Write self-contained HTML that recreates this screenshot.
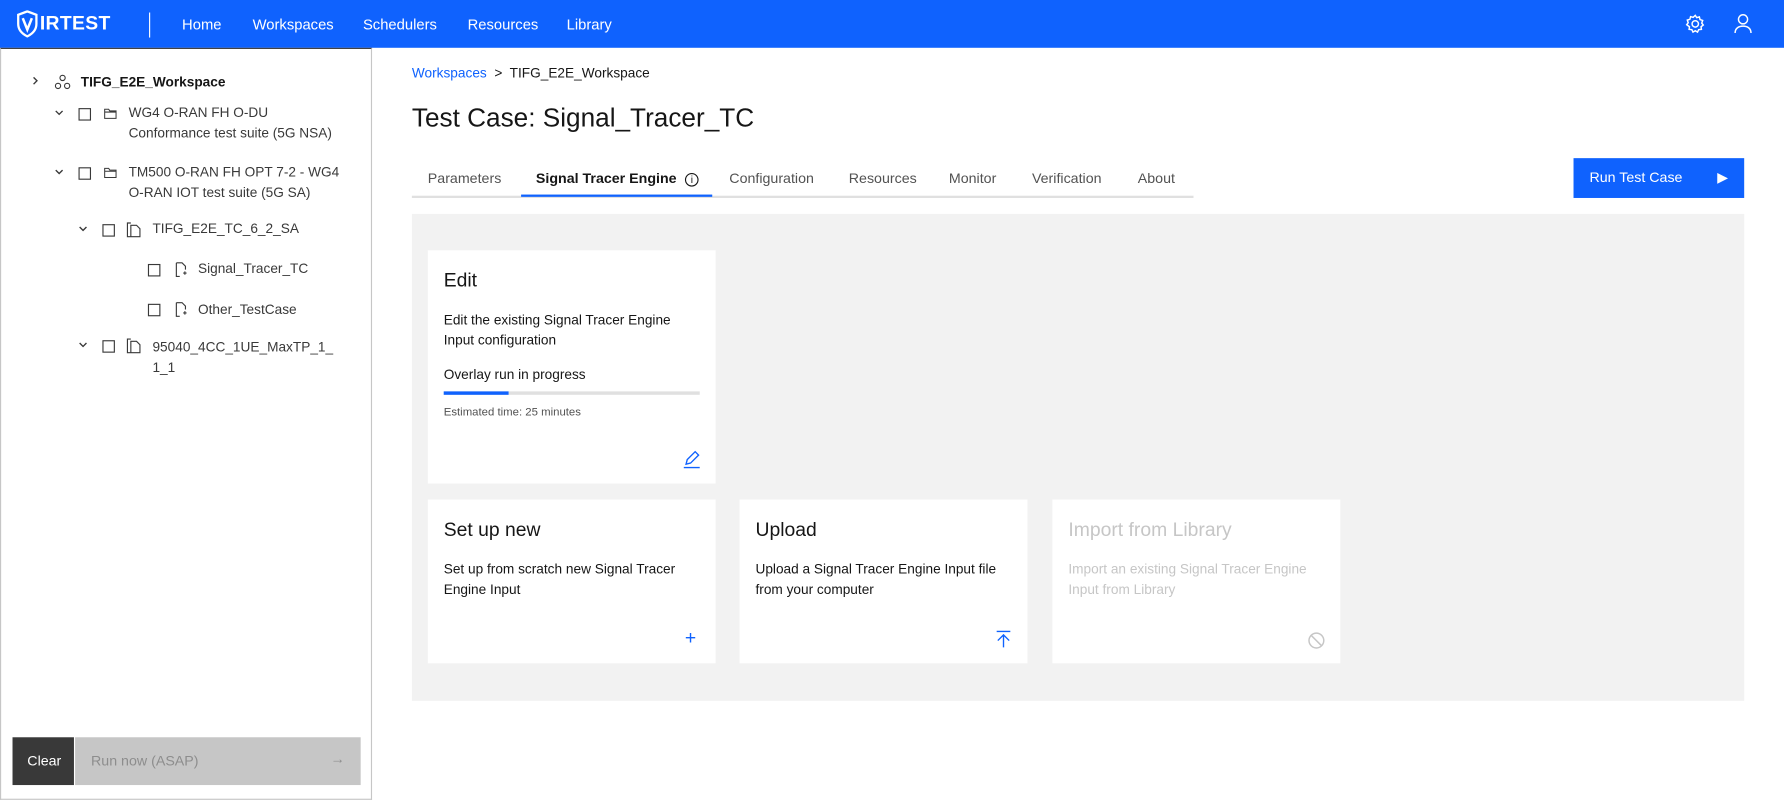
<!DOCTYPE html>
<html><head><meta charset="utf-8"><style>
*{box-sizing:border-box;margin:0;padding:0}
html,body{width:1784px;height:800px;overflow:hidden;background:#fff}
#w{width:1568px;height:703px;transform:scale(1.13776);transform-origin:0 0;position:relative;font-family:"Liberation Sans",sans-serif;color:#161616}
.a{position:absolute}
.top{left:0;top:0;width:1568px;height:42px;background:#0f62fe;color:#fff}
.nav{font-size:13px;top:14px;color:#fff}
.side{left:0;top:42px;width:327px;height:661px;border:1px solid #c6c6c6;border-top:1px solid #333}
.t{font-size:12px;color:#393939;line-height:18px}
.cb{width:11px;height:11px;border:1.3px solid #393939}
.card{background:#fff;width:253px}
.card h3{font-size:17px;font-weight:normal;position:absolute;left:14px;top:17px}
.card p{font-size:12px;line-height:18px;position:absolute;left:14px;top:52px;width:215px;color:#161616}
.tab{font-size:12.5px;top:150px;color:#525252}
</style></head><body><div id="w">
<svg width="0" height="0" style="position:absolute"><defs>
<symbol id="chev" viewBox="0 0 10 10"><path d="M2 3.5l3 3 3-3" fill="none" stroke="#393939" stroke-width="1.2"/></symbol>
<symbol id="fold" viewBox="0 0 12 12"><path d="M1 2h3.5l1 1.5H11V10H1z M1 4.5h10" fill="none" stroke="#393939" stroke-width="0.9"/></symbol>
<symbol id="file" viewBox="0 0 12 14"><path d="M2 1h5l3 3v3M2 1v12h3M8 10h3M9.5 8.5v3" fill="none" stroke="#393939" stroke-width="1"/></symbol>
<symbol id="suite" viewBox="0 0 14 14"><path d="M4 1H1v12h3M4 3h5l3 3v7H4z" fill="none" stroke="#393939" stroke-width="1"/></symbol>
</defs></svg>
<div class="a top">
 <svg class="a" style="left:14px;top:9px" width="20" height="24" viewBox="0 0 20 24"><path d="M10 1L2 4v8c0 6 4 9 8 11 4-2 8-5 8-11V4z" fill="none" stroke="#fff" stroke-width="2"/><path d="M6 7l4 10 4-10" fill="none" stroke="#fff" stroke-width="2.2"/></svg>
 <div class="a" style="left:35px;top:11px;font-size:17px;font-weight:bold;letter-spacing:0.3px">IRTEST</div>
 <div class="a" style="left:131px;top:11px;width:1px;height:22px;background:#fff"></div>
 <div class="a nav" style="left:160px">Home</div>
 <div class="a nav" style="left:222px">Workspaces</div>
 <div class="a nav" style="left:319px">Schedulers</div>
 <div class="a nav" style="left:411px">Resources</div>
 <div class="a nav" style="left:498px">Library</div>
 <svg class="a" style="left:1481px;top:12px" width="18" height="18" viewBox="0 0 18 18" fill="none" stroke="#fff" stroke-width="1.3"><circle cx="9" cy="9" r="2.8"/><path d="M9 1.5l1.3 2 2.3-.6.6 2.3 2.3.8-.8 2.3 1.3 1.7-1.9 1.5.3 2.3-2.4.3-1 2.1-2-1.2-2 1.2-1-2.1-2.4-.3.3-2.3L1.5 9.7 2.8 8 2 5.7l2.3-.8.6-2.3 2.3.6z"/></svg>
 <svg class="a" style="left:1524px;top:12px" width="16" height="18" viewBox="0 0 16 18" fill="none" stroke="#fff" stroke-width="1.3"><circle cx="8" cy="5" r="4"/><path d="M1 17c0-4 3-6 7-6s7 2 7 6"/></svg>
</div>
<div class="a side">
 <svg class="a" style="left:25px;top:23px" width="10" height="10" viewBox="0 0 10 10"><path d="M3.5 2l3 3-3 3" fill="none" stroke="#393939" stroke-width="1.2"/></svg>
 <svg class="a" style="left:47px;top:22px" width="14" height="14" viewBox="0 0 14 14" fill="none" stroke="#393939"><circle cx="7" cy="3.5" r="2.3"/><circle cx="3" cy="10.5" r="2.3"/><circle cx="11" cy="10.5" r="2.3"/></svg>
 <div class="a t" style="left:70px;top:20px;font-weight:bold;color:#161616">TIFG_E2E_Workspace</div>
 <svg class="a" style="left:46px;top:51px" width="10" height="10"><use href="#chev"/></svg><div class="a cb" style="left:68px;top:52px"></div><svg class="a" style="left:90px;top:51px" width="12" height="12"><use href="#fold"/></svg>
 <div class="a t" style="left:112px;top:47px">WG4 O-RAN FH O-DU<br>Conformance test suite (5G NSA)</div>
 <svg class="a" style="left:46px;top:103px" width="10" height="10"><use href="#chev"/></svg><div class="a cb" style="left:68px;top:104px"></div><svg class="a" style="left:90px;top:103px" width="12" height="12"><use href="#fold"/></svg>
 <div class="a t" style="left:112px;top:99px">TM500 O-RAN FH OPT 7-2 - WG4<br>O-RAN IOT test suite (5G SA)</div>
 <svg class="a" style="left:67px;top:153px" width="10" height="10"><use href="#chev"/></svg><div class="a cb" style="left:89px;top:154px"></div><svg class="a" style="left:110px;top:152px" width="14" height="14"><use href="#suite"/></svg>
 <div class="a t" style="left:133px;top:149px">TIFG_E2E_TC_6_2_SA</div>
 <div class="a cb" style="left:129px;top:189px"></div><svg class="a" style="left:152px;top:187px" width="12" height="14"><use href="#file"/></svg><div class="a t" style="left:173px;top:184px">Signal_Tracer_TC</div>
 <div class="a cb" style="left:129px;top:224px"></div><svg class="a" style="left:152px;top:222px" width="12" height="14"><use href="#file"/></svg><div class="a t" style="left:173px;top:220px">Other_TestCase</div>
 <svg class="a" style="left:67px;top:255px" width="10" height="10"><use href="#chev"/></svg><div class="a cb" style="left:89px;top:256px"></div><svg class="a" style="left:110px;top:254px" width="14" height="14"><use href="#suite"/></svg>
 <div class="a t" style="left:133px;top:253px">95040_4CC_1UE_MaxTP_1_<br>1_1</div>
 <div class="a" style="left:10px;top:605px;width:54px;height:42px;background:#393939;color:#fff;font-size:12.5px;padding:14px 0 0 13px">Clear</div>
 <div class="a" style="left:65px;top:605px;width:251px;height:42px;background:#c6c6c6;color:#8d8d8d;font-size:12.5px;padding:14px 0 0 14px">Run now (ASAP)<span style="position:absolute;right:14px;top:12px">→</span></div>
</div>
<div class="a" style="left:362px;top:57px;font-size:12px;color:#0f62fe">Workspaces <span style="color:#161616">&nbsp;&gt;&nbsp; TIFG_E2E_Workspace</span></div>
<div class="a" style="left:362px;top:90px;font-size:23px;color:#161616">Test Case: Signal_Tracer_TC</div>
<div class="a" style="left:362px;top:172px;width:687px;height:2px;background:#e0e0e0"></div>
<div class="a" style="left:458px;top:171px;width:168px;height:2px;background:#0f62fe"></div>
<div class="a tab" style="left:376px">Parameters</div>
<div class="a tab" style="left:471px;color:#161616;font-weight:bold">Signal Tracer Engine <span style="font-weight:normal;display:inline-block;width:12px;height:12px;border:1px solid #161616;border-radius:50%;font-size:9px;text-align:center;line-height:11px;margin-left:4px">i</span></div>
<div class="a tab" style="left:641px">Configuration</div>
<div class="a tab" style="left:746px">Resources</div>
<div class="a tab" style="left:834px">Monitor</div>
<div class="a tab" style="left:907px">Verification</div>
<div class="a tab" style="left:1000px">About</div>
<div class="a" style="left:1383px;top:139px;width:150px;height:35px;background:#0f62fe;color:#fff;font-size:12.5px;padding:10px 0 0 14px">Run Test Case<span style="position:absolute;right:14px;top:9px">▶</span></div>
<div class="a" style="left:362px;top:188px;width:1171px;height:428px;background:#f2f2f2"></div>
<div class="a card" style="left:376px;top:220px;height:205px">
 <h3>Edit</h3><p>Edit the existing Signal Tracer Engine Input configuration</p>
 <div class="a" style="left:14px;top:102px;font-size:12px">Overlay run in progress</div>
 <div class="a" style="left:14px;top:124px;width:225px;height:3px;background:#e0e0e0"><div style="width:57px;height:3px;background:#0f62fe"></div></div>
 <div class="a" style="left:14px;top:137px;font-size:10px;color:#525252">Estimated time: 25 minutes</div>
 <svg class="a" style="left:224px;top:176px" width="16" height="16" viewBox="0 0 16 16" fill="none" stroke="#0f62fe" stroke-width="1.2"><path d="M1 15h14M3 12l1-4 7-7 3 3-7 7z"/></svg>
</div>
<div class="a card" style="left:376px;top:439px;height:144px"><h3>Set up new</h3><p>Set up from scratch new Signal Tracer Engine Input</p><div class="a" style="left:226px;top:112px;color:#0f62fe;font-size:17px">+</div></div>
<div class="a card" style="left:650px;top:439px;height:144px"><h3>Upload</h3><p style="width:230px">Upload a Signal Tracer Engine Input file from your computer</p>
 <svg class="a" style="left:224px;top:115px" width="16" height="16" viewBox="0 0 16 16" fill="none" stroke="#0f62fe" stroke-width="1.2"><path d="M2 1h12M8 15V4M3 9l5-5 5 5"/></svg></div>
<div class="a card" style="left:925px;top:439px;height:144px;color:#c6c6c6"><h3>Import from Library</h3><p style="color:#c6c6c6;width:230px">Import an existing Signal Tracer Engine Input from Library</p>
 <svg class="a" style="left:224px;top:116px" width="16" height="16" viewBox="0 0 16 16" fill="none" stroke="#c6c6c6" stroke-width="1.3"><circle cx="8" cy="8" r="6.5"/><path d="M3.5 3.5l9 9"/></svg></div>
</div></body></html>
